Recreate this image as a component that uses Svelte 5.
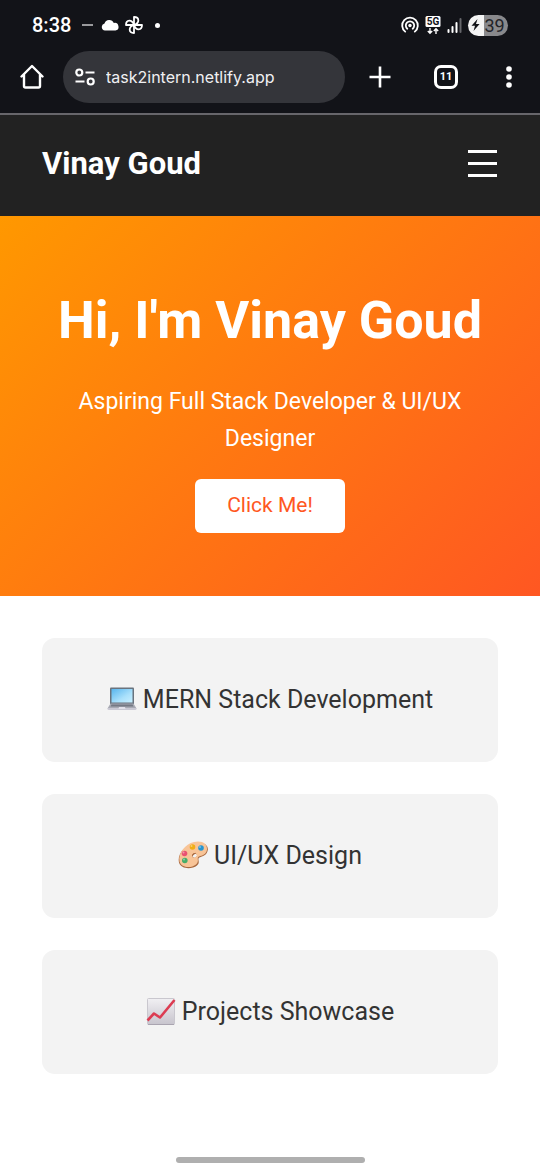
<script>
  let menuOpen = $state(false);
  let url = $state('task2intern.netlify.app');
  const cards = [
    { icon: 'laptop', label: 'MERN Stack Development' },
    { icon: 'palette', label: 'UI/UX Design' },
    { icon: 'chart', label: 'Projects Showcase' }
  ];
</script>

<div class="screen">
  <div class="browser">
    <div class="status">
      <span class="time">8:38</span>
      <span class="dash"></span>
      <svg class="cloud" width="18" height="12" viewBox="0 0 18 12"><path d="M4 11.5a3.5 3.5 0 0 1-.5-6.9A5 5 0 0 1 12.8 4 3.8 3.8 0 0 1 14.5 11.5Z" fill="#fff" /></svg>
      <svg class="fan" width="18" height="18" viewBox="0 0 18 18" fill="none" stroke="#fff" stroke-width="1.8" stroke-linejoin="round">
        <path d="M9 9V1C14.500 1 15 7 9 9Z" />
        <path d="M9 9H17C17 14.500 11 15 9 9Z" />
        <path d="M9 9V17C3.500 17 3 11 9 9Z" />
        <path d="M9 9H1C1 3.500 7 3 9 9Z" />
      </svg>
      <span class="dot"></span>
      <div class="signals">
        <svg width="18" height="18" viewBox="0 0 18 18" fill="none" stroke="#fff" stroke-width="1.8" stroke-linecap="round">
          <circle cx="9" cy="9.5" r="1.7" fill="#fff" stroke="none" />
          <path d="M6.3 12.7a4.2 4.2 0 1 1 5.4 0" />
          <path d="M4.2 15.6a7.8 7.8 0 1 1 9.6 0" />
        </svg>
        <svg class="net" width="16" height="19" viewBox="0 0 16 19">
          <rect x="0.5" width="15" height="11" rx="1.5" fill="#fff" />
          <text x="8" y="9" text-anchor="middle" font-size="10" font-weight="700" fill="#121318">5G</text>
          <path d="M5 12v5M2.8 15 5 17.2 7.2 15M11 18v-5M8.8 15 11 12.8 13.2 15" fill="none" stroke="#fff" stroke-width="1.4" />
        </svg>
        <svg width="15" height="16" viewBox="0 0 15 16" fill="#fff">
          <rect x="0.5" y="12" width="2" height="4" rx="1" /><rect x="4.5" y="9" width="2" height="7" rx="1" /><rect x="8.5" y="5" width="2" height="11" rx="1" /><rect x="12.5" y="1" width="2" height="15" rx="1" fill="#66676b" />
        </svg>
        <span class="battery">
          <svg width="9" height="12" viewBox="0 0 9 12"><path d="M6.5 0 0.5 6.7H4L2.5 12 8.6 5H5Z" fill="#121318" /></svg>
          39
        </span>
      </div>
    </div>
    <div class="toolbar">
      <button class="home" aria-label="Home">
        <svg width="24" height="25" viewBox="0 0 24 25" fill="none" stroke="#fff" stroke-width="2.4" stroke-linejoin="round" stroke-linecap="round"><path d="M1.5 12.5 12 2 22.5 12.5M4 10.5V22Q4 23.5 5.5 23.5H18.5Q20 23.5 20 22V10.5" /></svg>
      </button>
      <div class="address">
        <svg width="20" height="18" viewBox="0 0 20 18" fill="none" stroke="#fff" stroke-width="2.2"><circle cx="4.3" cy="4.5" r="3" /><path d="M10.5 4.5H19.5M0.5 13.5H9.5" /><circle cx="15.7" cy="13.5" r="3" /></svg>
        <input aria-label="Address" bind:value={url} />
      </div>
      <button class="plus" aria-label="New tab"><svg width="22" height="22" viewBox="0 0 22 22" stroke="#fff" stroke-width="2.6"><path d="M11 0.5V21.5M0.5 11H21.5" /></svg></button>
      <button class="tabs" aria-label="11 open tabs"><span>11</span></button>
      <button class="more" aria-label="More"><svg width="6" height="22" viewBox="0 0 6 22" fill="#fff"><circle cx="3" cy="3" r="2.8" /><circle cx="3" cy="11" r="2.8" /><circle cx="3" cy="19" r="2.8" /></svg></button>
    </div>
  </div>

  <header>
    <div class="brand">Vinay Goud</div>
    <button class="menu" aria-label="Menu" aria-expanded={menuOpen} onclick={() => (menuOpen = !menuOpen)}>
      <svg width="30" height="27" viewBox="0 0 30 27" fill="#fff"><rect width="29" height="3" /><rect y="12" width="29" height="3" /><rect y="24" width="29" height="3" /></svg>
    </button>
  </header>

  <section class="hero">
    <h1>Hi, I'm Vinay Goud</h1>
    <p>Aspiring Full Stack Developer &amp; UI/UX Designer</p>
    <button class="cta">Click Me!</button>
  </section>

  <main>
    {#each cards as card}
      <article>
        {#if card.icon === 'laptop'}
          <svg width="30" height="30" viewBox="0 0 30 30">
            <defs><linearGradient id="display" x1="0" y1="0" x2="1" y2="1"><stop stop-color="#57b5ee" /><stop offset=".6" stop-color="#a9e0fb" /><stop offset="1" stop-color="#c8efff" /></linearGradient></defs>
            <path d="M3 4.5Q3 3.5 4 3.5H26Q27 3.5 27 4.5V20H3Z" fill="#69737e" />
            <rect x="4.5" y="5" width="21" height="13.5" fill="url(#display)" />
            <path d="M3.5 19.5H26.5L29.5 24.5H.5Z" fill="#a7a9b3" />
            <path d="M4.5 20.5H25.5L26.5 22.5H3.5Z" fill="#747984" />
            <path d="M.5 24H29.5V25Q29.5 26 28 26H2Q.5 26 .5 25Z" fill="#c9c8d3" />
            <path d="M12 23H18L18.5 25H11.5Z" fill="#e1e0e9" />
          </svg>
        {:else if card.icon === 'palette'}
          <svg width="30" height="30" viewBox="0 0 30 30">
            <path d="M17 3C25 1 30.5 5 29.8 10 29 15.5 24.5 16 21.5 17.5 18.5 19 23 22 19 25.5 14 29.5 3 29.5 1 22.5 -1 14 7 5 17 3ZM16 14.5C13 16 15 18.5 17.5 17.5 20.5 16 19 13 16 14.5Z" fill="#a96a40" fill-rule="evenodd" />
            <path d="M16 2C24 0 29.5 4 29 9.5 28.5 14.5 24 15.5 21 16.5 18 17.8 22 21 18 24.5 13 28.5 3.5 28 1.5 21.5 0 13.5 7 4 16 2ZM15.5 13.5C12.5 15.5 14.5 18.5 17 17.5 20.5 15.5 18.5 12.5 15.5 13.5Z" fill="#f8c497" fill-rule="evenodd" />
            <path d="M14.5 16Q14 13.5 17.5 13.3" fill="none" stroke="#a96a40" stroke-width="1" />
            <circle cx="14.5" cy="7" r="2.8" fill="#f0ad16" /><circle cx="23" cy="8" r="2.8" fill="#2795cf" /><circle cx="6.5" cy="13.5" r="2.8" fill="#e95271" /><circle cx="6.8" cy="20.5" r="2.8" fill="#46ad68" />
            <g fill="#fff" opacity=".4"><circle cx="13.5" cy="6" r="1" /><circle cx="22" cy="7" r="1" /><circle cx="5.5" cy="12.5" r="1" /><circle cx="6" cy="19.5" r="1" /></g>
          </svg>
        {:else}
          <svg width="30" height="30" viewBox="0 0 30 30">
            <defs><linearGradient id="sheet" x1="0" y1="0" x2="0" y2="1"><stop stop-color="#f1f0f3" /><stop offset="1" stop-color="#c7c4cd" /></linearGradient></defs>
            <rect x="1.5" y="2.5" width="27" height="26" rx="1" fill="url(#sheet)" stroke="#c9c7ce" />
            <path d="M2 28.5H28" stroke="#a9a4b0" />
            <path d="M1.5 24.5 8 17.5 14 21.5 28.5 4" fill="none" stroke="#dc3c52" stroke-width="2.6" stroke-linejoin="round" />
          </svg>
        {/if}
        <span>{card.label}</span>
      </article>
    {/each}
  </main>
  <div class="handle"></div>
</div>

<style>
  :global(body) { margin: 0; background: #fff; }
  .screen { min-height: 100vh; display: flex; flex-direction: column; font-family: Roboto, sans-serif; color: #333; }
  button { border: 0; padding: 0; background: none; color: inherit; font: inherit; cursor: pointer; }
  svg { display: block; flex: none; }
  .browser { background: #121318; color: #fff; border-bottom: 2px solid #67666b; }
  .status { height: 50px; padding: 0 32px; display: flex; align-items: center; }
  .time { font-size: 20px; font-weight: 500; }
  .dash { width: 11px; height: 2px; margin-left: 11px; background: #99999c; }
  .cloud { margin-left: 8px; }
  .fan { margin-left: 6px; }
  .dot { width: 5px; height: 5px; border-radius: 50%; background: #fff; margin-left: 12px; }
  .signals { margin-left: auto; display: flex; align-items: center; gap: 6px; }
  .battery { display: flex; align-items: center; justify-content: center; gap: 4px; width: 40px; height: 21px; border-radius: 11px; color: #222328; font-size: 18px; background: linear-gradient(90deg, #f4f4f4 39%, #89898c 39%); }
  .toolbar { height: 53px; padding: 0 28px 10px 20px; display: flex; align-items: center; }
  .address { flex: 1; min-width: 0; height: 52px; margin-left: 19px; padding: 0 12px; box-sizing: border-box; display: flex; align-items: center; gap: 11px; border-radius: 26px; background: #34353a; }
  .address input { flex: 1; min-width: 0; padding: 0; border: 0; outline: 0; background: none; color: #f0f0f2; font: 16px Inter, sans-serif; }
  .plus { margin-left: 24px; }
  .tabs { box-sizing: border-box; width: 24px; height: 24px; margin-left: 43px; border: 3px solid #fff; border-radius: 7px; display: grid; place-items: center; font-size: 11px; font-weight: 700; }
  .more { margin-left: 48px; }
  header { height: 97px; padding: 0 42px 4px; display: flex; align-items: center; justify-content: space-between; background: #222; color: #fff; }
  .brand { font-size: 31px; font-weight: 700; }
  .hero { padding: 74px 42px 63px; display: flex; flex-direction: column; align-items: center; text-align: center; color: #fff; background: linear-gradient(135deg, #ff9800, #ff5722); }
  h1 { margin: 0; font-size: 52px; line-height: 62px; }
  p { margin: 31px 0 22px; font-size: 23px; line-height: 37px; }
  .cta { height: 54px; padding: 0 32px 2px; border-radius: 6px; background: #fff; color: #ff5722; font-size: 21px; }
  main { padding: 42px; display: flex; flex-direction: column; gap: 32px; }
  article { height: 122px; padding-bottom: 2px; display: flex; align-items: center; justify-content: center; gap: 6px; border-radius: 13px; background: #f3f3f3; font-size: 25px; }
  .handle { width: 35%; height: 6px; margin: auto auto 7px; border-radius: 3px; background: #afafaf; }
</style>
